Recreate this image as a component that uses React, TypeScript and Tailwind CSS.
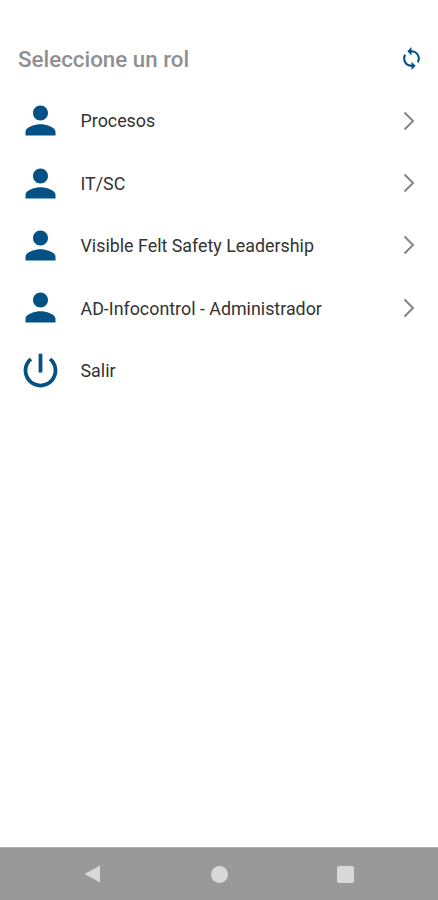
const roles = [
  'Procesos',
  'IT/SC',
  'Visible Felt Safety Leadership',
  'AD-Infocontrol - Administrador',
];

function PersonIcon() {
  return (
    <svg viewBox="0 0 24 24" className="size-[45px] shrink-0 fill-[#045285]">
      <path d="M12 12c2.21 0 4-1.79 4-4s-1.79-4-4-4-4 1.79-4 4 1.79 4 4 4zm0 2c-2.67 0-8 1.34-8 4v2h16v-2c0-2.66-5.33-4-8-4z" />
    </svg>
  );
}

function PowerIcon() {
  return (
    <svg viewBox="0 0 24 24" className="size-[45px] shrink-0 fill-[#045285]">
      <path d="M13 3h-2v10h2V3zm4.83 2.17l-1.42 1.42C17.99 7.86 19 9.81 19 12c0 3.87-3.13 7-7 7s-7-3.13-7-7c0-2.19 1.01-4.14 2.58-5.42L6.17 5.17C4.23 6.82 3 9.26 3 12c0 4.97 4.03 9 9 9s9-4.03 9-9c0-2.74-1.23-5.18-3.17-6.83z" />
    </svg>
  );
}

function SyncIcon() {
  return (
    <svg viewBox="0 0 24 24" className="size-[25px] fill-[#045285]">
      <path d="M12 4V1L8 5l4 4V6c3.31 0 6 2.69 6 6 0 1.01-.25 1.97-.7 2.8l1.46 1.46C19.54 15.03 20 13.57 20 12c0-4.42-3.58-8-8-8zm0 14c-3.31 0-6-2.69-6-6 0-1.01.25-1.97.7-2.8L5.24 7.74C4.46 8.97 4 10.43 4 12c0 4.42 3.58 8 8 8v3l4-4-4-4v3z" />
    </svg>
  );
}

function ChevronIcon() {
  return (
    <svg
      viewBox="0 0 12 20"
      className="h-5 w-3 fill-none stroke-[#858585] stroke-2"
    >
      <path d="M1.5 1.5L10 10L1.5 18.5" />
    </svg>
  );
}

export default function App() {
  return (
    <div className="flex h-[900px] w-[438px] flex-col overflow-hidden bg-white font-['Roboto',sans-serif]">
      <header className="flex h-[89.5px] shrink-0 items-end justify-between pr-[14px] pb-[18.5px] pl-[18px]">
        <h1 className="text-[22.35px] leading-6 font-medium text-[#909090]">
          Seleccione un rol
        </h1>
        <button aria-label="Actualizar">
          <SyncIcon />
        </button>
      </header>

      <ul className="flex flex-1 flex-col pr-[23px] pl-[18px]">
        {roles.map((role) => (
          <li key={role} className="flex h-[62.4px] items-center">
            <PersonIcon />
            <span className="ml-[17.5px] flex-1 pt-[1.6px] text-[17.85px] leading-6 text-[#333333]">
              {role}
            </span>
            <ChevronIcon />
          </li>
        ))}
        <li className="flex h-[62.4px] items-center">
          <PowerIcon />
          <span className="ml-[17.5px] pt-[1.6px] text-[17.85px] leading-6 text-[#333333]">
            Salir
          </span>
        </li>
      </ul>

      <nav className="flex h-[53px] shrink-0 items-center justify-between border-t border-[#b0b0b0] bg-[#999999] pr-[84px] pl-[84px]">
        <svg viewBox="0 0 17 18" className="h-[18px] w-[17px] fill-[#d8d8d8]">
          <path d="M16 .5v17L.5 9z" />
        </svg>
        <div className="size-[17px] rounded-full bg-[#d8d8d8]" />
        <div className="size-[17px] rounded-xs bg-[#d8d8d8]" />
      </nav>
    </div>
  );
}
